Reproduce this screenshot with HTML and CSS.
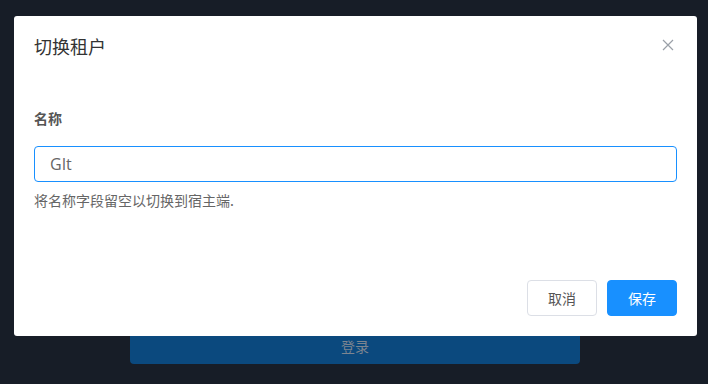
FILE: index.html
```html
<!DOCTYPE html>
<html lang="zh-CN">
<head>
<meta charset="utf-8">
<link rel="stylesheet" href="styles.css">
</head>
<body>
<div class="page">
  <button class="login">登录</button>
</div>
<div class="modal">
  <div class="modal-header">
    <span class="modal-title">切换租户</span>
    <span class="close">
      <svg width="12" height="12" viewBox="0 0 12 12"><path d="M1 1L11 11M11 1L1 11" stroke="#9aa0a8" stroke-width="1.2" fill="none"/></svg>
    </span>
  </div>
  <div class="modal-body">
    <div class="label">名称</div>
    <div class="input">GIt</div>
    <div class="help">将名称字段留空以切换到宿主端.</div>
  </div>
  <div class="modal-footer">
    <button class="btn btn-default">取消</button>
    <button class="btn btn-primary">保存</button>
  </div>
</div>
</body>
</html>
```
FILE: styles.css
```css
* { box-sizing: border-box; }
html, body { margin: 0; padding: 0; }
body {
  background: #171d27;
  font-family: "Noto Sans", "Noto Sans CJK SC", sans-serif;
  width: 708px;
  height: 384px;
  overflow: hidden;
}
.page {
  height: 384px;
  display: flex;
  flex-direction: column;
  justify-content: flex-end;
  align-items: flex-start;
  padding: 0 0 20px 130px;
}
.login {
  width: 450px;
  height: 36px;
  border: none;
  border-radius: 4px;
  background: #0b497e;
  color: #7d8590;
  font-family: "Noto Sans CJK SC", sans-serif;
  font-size: 14px;
  padding: 0;
}
.modal {
  position: absolute;
  left: 14px;
  top: 16px;
  width: 683px;
  height: 320px;
  background: #fff;
  border-radius: 3px;
  display: flex;
  flex-direction: column;
}
.modal-header {
  height: 60px;
  padding: 0 20px;
  display: flex;
  align-items: center;
  justify-content: space-between;
}
.modal-title {
  font-family: "Noto Sans CJK SC", sans-serif;
  font-size: 18px;
  color: #333;
  line-height: 24px;
}
.close {
  display: flex;
  margin-right: 3px;
  margin-top: -2px;
}
.modal-body {
  padding: 0 20px;
  flex: 1;
}
.label {
  margin-top: 32px;
  font-family: "Noto Sans CJK SC", sans-serif;
  font-size: 14px;
  font-weight: 700;
  color: #555;
  line-height: 20px;
}
.input {
  margin-top: 18px;
  height: 36px;
  border: 1px solid #1890ff;
  border-radius: 4px;
  padding: 0 15px;
  display: flex;
  align-items: center;
  font-family: "Open Sans", sans-serif;
  font-size: 16px;
  color: #666;
}
.help {
  margin-top: 8px;
  font-family: "Noto Sans CJK SC", sans-serif;
  font-size: 14px;
  color: #666;
  line-height: 20px;
}
.modal-footer {
  display: flex;
  justify-content: flex-end;
  gap: 10px;
  padding: 0 20px 20px;
}
.btn {
  width: 70px;
  height: 36px;
  border-radius: 4px;
  font-family: "Noto Sans CJK SC", sans-serif;
  font-size: 14px;
  padding: 0;
}
.btn-default {
  background: #fff;
  border: 1px solid #dcdfe6;
  color: #555;
}
.btn-primary {
  background: #1890ff;
  border: 1px solid #1890ff;
  color: #fff;
}
```
